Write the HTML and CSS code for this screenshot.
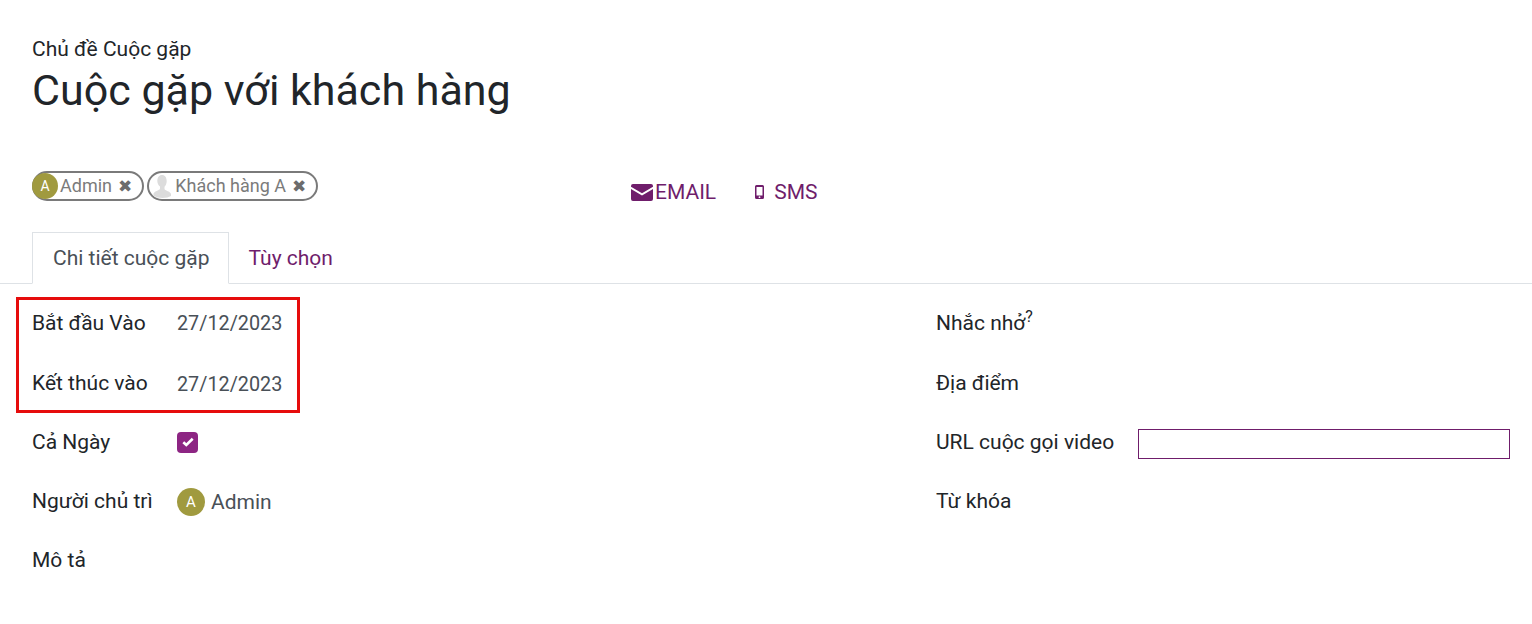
FILE: index.html
```html
<!DOCTYPE html>
<html lang="vi">
<head>
<meta charset="utf-8">
<title>Cuộc gặp với khách hàng</title>
<link rel="stylesheet" href="styles.css">
</head>
<body>
<div class="page">
  <header class="head">
    <div class="subject">Chủ đề Cuộc gặp</div>
    <h1 class="title">Cuộc gặp với khách hàng</h1>
  </header>
  <div class="people-row">
    <div class="tags">
      <span class="tag"><span class="avatar avatar-sm">A</span><span class="tag-name">Admin</span><span class="tag-x">✖</span></span>
      <span class="tag tag-second">
        <svg class="person" viewBox="0 0 24 24"><path fill="#dcdcdc" d="M12 1c3 0 4.700 2.600 4.700 6 0 2.600-1 4.600-2.200 5.800v1.700c0 1 .6 1.500 1.800 2 2.200.9 3.700 1.700 4.700 3.200v2.300q-3 2-8.500 2T3.500 21.700v-2.300c1-1.500 2.500-2.300 4.700-3.200 1.200-.5 1.800-1 1.800-2v-1.700C8.800 11.600 7.300 9.600 7.300 7c0-3.400 1.700-6 4.700-6z"/></svg>
        <span class="tag-name">Khách hàng A</span><span class="tag-x">✖</span>
      </span>
    </div>
    <div class="actions">
      <a class="action action-email">
        <svg class="mail" viewBox="0 0 22 17"><path fill="#6f1d6b" d="M2 0h18a2 2 0 0 1 2 2v.8L11 9.300 0 2.800V2a2 2 0 0 1 2-2zM0 5l11 6.500L22 5v10a2 2 0 0 1-2 2H2a2 2 0 0 1-2-2z"/></svg>EMAIL
      </a>
      <a class="action action-sms">
        <svg class="phone" viewBox="0 0 9 14"><path fill="#6f1d6b" fill-rule="evenodd" d="M1.500 0h6A1.500 1.500 0 0 1 9 1.500v11A1.500 1.500 0 0 1 7.500 14h-6A1.500 1.500 0 0 1 0 12.500v-11A1.500 1.500 0 0 1 1.500 0zM1.500 2v8.500h6V2zM4.500 11.300a.9.900 0 1 0 0 1.800.9.900 0 0 0 0-1.800z"/></svg>SMS
      </a>
    </div>
  </div>
  <nav class="tabs">
    <span class="tab tab-active">Chi tiết cuộc gặp</span>
    <span class="tab tab-plain">Tùy chọn</span>
  </nav>
  <main class="form">
    <section class="col col-left">
      <div class="row"><span class="label">Bắt đầu Vào</span><span class="value value-date">27/12/2023</span></div>
      <div class="row"><span class="label">Kết thúc vào</span><span class="value value-date">27/12/2023</span></div>
      <div class="row"><span class="label">Cả Ngày</span>
        <span class="check"><svg viewBox="0 0 12 10"><path d="M1.300 5.200l3 2.800 6.400-6.200" fill="none" stroke="#fff" stroke-width="2.600"/></svg></span></div>
      <div class="row"><span class="label">Người chủ trì</span>
        <span class="value value-user"><span class="avatar avatar-lg">A</span>Admin</span></div>
      <div class="row"><span class="label">Mô tả</span></div>
    </section>
    <section class="col col-right">
      <div class="row"><span class="label label-wide">Nhắc nhở<sup class="help">?</sup></span></div>
      <div class="row"><span class="label label-wide">Địa điểm</span></div>
      <div class="row"><span class="label label-wide">URL cuộc gọi video</span><input class="url" type="text"></div>
      <div class="row"><span class="label label-wide">Từ khóa</span></div>
    </section>
  </main>
  <div class="highlight"></div>
</div>
</body>
</html>
```
FILE: styles.css
```css
* { box-sizing: border-box; }
html, body { margin: 0; height: 100%; background: #fff; overflow: hidden; }
body { font-family: Roboto, "Noto Sans", sans-serif; color: #212529; font-size: 21px; }
.page { position: relative; width: 1532px; height: 624px; }
.head { padding: 37px 32px 0; }
.subject { font-size: 21px; line-height: 24px; }
.title { margin: 2px 0 0; font-size: 43px; font-weight: 400; line-height: 54px; }
.people-row { display: flex; margin-top: 54px; height: 61px; padding-left: 32px; }
.tags { display: flex; gap: 3px; height: 30px; width: 599px; flex: none; }
.tag { display: inline-flex; align-items: center; height: 30px; border: 2px solid #7a7a7a; border-radius: 15px; color: #7b7b7b; font-size: 18px; }
.tag-name { margin-left: 2px; padding-bottom: 2px; }
.tag-second .tag-name { margin-left: 1px; }
.tag-x { margin-left: 6px; margin-right: 10px; font-size: 17px; color: #6c6c6c; font-family: "DejaVu Sans", sans-serif; }
.avatar { display: inline-flex; align-items: center; justify-content: center; border-radius: 50%; background: #a09a3f; color: #fff; flex: none; }
.avatar-sm { width: 26px; height: 26px; font-size: 14px; margin-left: -2px; }
.person { width: 24px; height: 24px; margin-left: 1px; }
.actions { display: flex; align-items: center; height: 42px; color: #6f1d6b; font-size: 21px; }
.action { display: inline-flex; align-items: center; }
.mail { width: 22px; height: 17px; margin-right: 2px; }
.action-sms { margin-left: 39px; }
.phone { width: 9px; height: 14px; margin-right: 10px; }
.tabs { display: flex; height: 52px; padding-left: 32px; border-bottom: 1px solid #dee2e6; }
.tab { height: 52px; line-height: 50px; border: 1px solid transparent; }
.tab-active { padding: 0 18px 0 20px; color: #495057; border-color: #dee2e6 #dee2e6 #fff; background: #fff; }
.tab-plain { padding: 0 19px; color: #6f1d6b; }
.form { display: flex; padding: 8.5px 0 0 32px; }
.col-left { width: 904px; flex: none; }
.col-right { flex: 1; }
.row { display: flex; align-items: center; height: 59px; }
.row:first-child { height: 61px; padding-bottom: 0.5px; }
.label { width: 145px; flex: none; }
.label-wide { width: 202px; }
.value { color: #495057; font-size: 21px; }
.value-date { font-size: 19.8px; padding-top: 2px; }
.value-user { display: inline-flex; align-items: center; gap: 6px; padding-top: 1px; }
.avatar-lg { width: 28px; height: 28px; font-size: 15px; }
.check { display: flex; align-items: center; justify-content: center; width: 21px; height: 21px; border-radius: 4px; background: #8d2583; }
.check svg { width: 12px; height: 10px; }
.help { font-size: 16px; line-height: 0; }
.url { width: 372px; height: 30px; margin-top: 4px; border: 1px solid #6f1d6b; background: #fff; border-radius: 0; padding: 0; outline: 0; }
.highlight { position: absolute; left: 16px; top: 297px; width: 284px; height: 116px; border: 3px solid #e60c0c; pointer-events: none; }
```
